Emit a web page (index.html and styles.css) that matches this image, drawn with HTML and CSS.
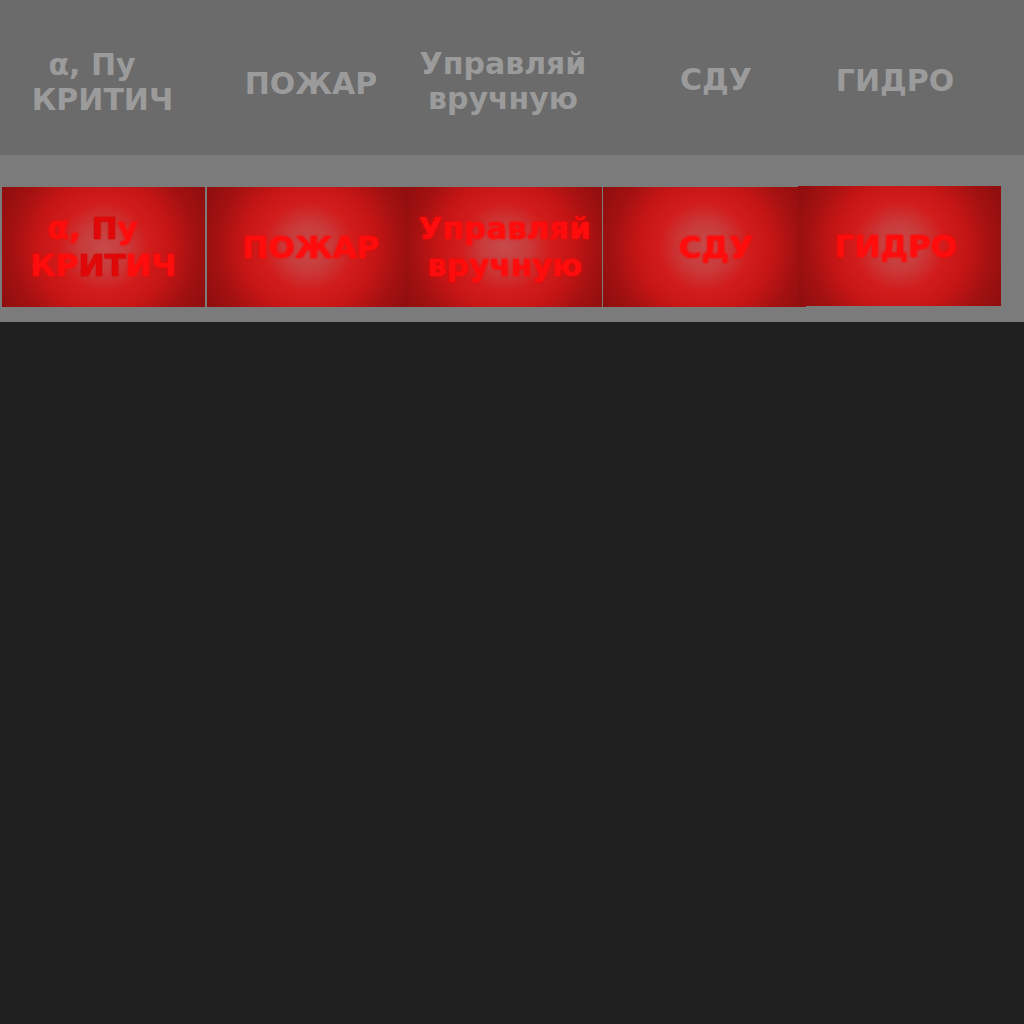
FILE: index.html
```html
<!DOCTYPE html>
<html lang="ru">
<head>
<meta charset="utf-8">
<title>Панель</title>
<link rel="stylesheet" href="styles.css">
</head>
<body>
<header class="topbar">
  <div class="col col-1"><span class="label two">α, Пу&nbsp;&nbsp;<br>КРИТИЧ</span></div>
  <div class="col col-2"><span class="label">ПОЖАР</span></div>
  <div class="col col-3"><span class="label two">Управляй<br>вручную</span></div>
  <div class="col col-4"><span class="label">СДУ</span></div>
  <div class="col col-5"><span class="label">ГИДРО</span></div>
</header>
<section class="strip">
  <div class="tile t1"><span class="alarm">α, <b>П</b>у&nbsp;&nbsp;<br>КР<b>ИТ</b>ИЧ</span></div>
  <div class="tile t2"><span class="alarm">ПОЖАР</span></div>
  <div class="tile t3"><span class="alarm">Управляй<br>вручную</span></div>
  <div class="tile t4"><span class="alarm">СДУ</span></div>
  <div class="tile t5"><span class="alarm">ГИДРО</span></div>
</section>
<main class="field"></main>
</body>
</html>
```
FILE: styles.css
```css
html, body {
  margin: 0;
  padding: 0;
  background: #202020;
  font-family: "DejaVu Sans", "Noto Sans", sans-serif;
}

.topbar {
  height: 155px;
  background: #6b6b6b;
  display: flex;
  align-items: stretch;
}

.col {
  display: flex;
  justify-content: center;
  align-items: center;
  box-sizing: border-box;
  padding-top: 9px;
}

.col-1 { width: 205px; }
.col-2 { width: 212px; padding-top: 12px; }
.col-3 { width: 172px; padding-top: 7px; }
.col-4 { width: 246px; padding-left: 8px; padding-top: 3px; }
.col-5 { width: 120px; padding-top: 6px; }

.label {
  color: #9b9b9b;
  font-weight: bold;
  font-size: 30px;
  line-height: 35px;
  text-align: center;
  white-space: nowrap;
}

.strip {
  height: 167px;
  background: #7b7b7b;
  display: flex;
  align-items: flex-start;
  padding-top: 32px;
  box-sizing: border-box;
}

.tile {
  width: 203px;
  height: 120px;
  flex: none;
  display: flex;
  justify-content: center;
  align-items: center;
  box-sizing: border-box;
  background:
    radial-gradient(circle at 50% 50%, #c64a4a 0px, #c93c3c 22px, #d21c1c 45px, #c41515 68px, #a31111 92px, #8a0e0e 120px);
}

.t1 { margin-left: 2px; }
.t2 { margin-left: 2px; padding-left: 5px; }
.t3 { margin-left: -2px; width: 194px; position: relative; }
.t4 { margin-left: 1px; padding-left: 23px; }
.t5 { margin-left: -8px; margin-top: -1px; padding-right: 7px; position: relative; }

.alarm {
  color: #ff0d0d;
  font-weight: bold;
  font-size: 31px;
  line-height: 37px;
  text-align: center;
  white-space: nowrap;
  text-shadow: 0 0 3px rgba(255, 0, 0, 0.9);
  filter: blur(0.5px);
}

.alarm b {
  font-weight: bold;
  color: #e00808;
  text-shadow: 0 0 2px #d00000, 0 0 1px #d00000;
}

.field {
  height: 702px;
  background: #202020;
}
```
